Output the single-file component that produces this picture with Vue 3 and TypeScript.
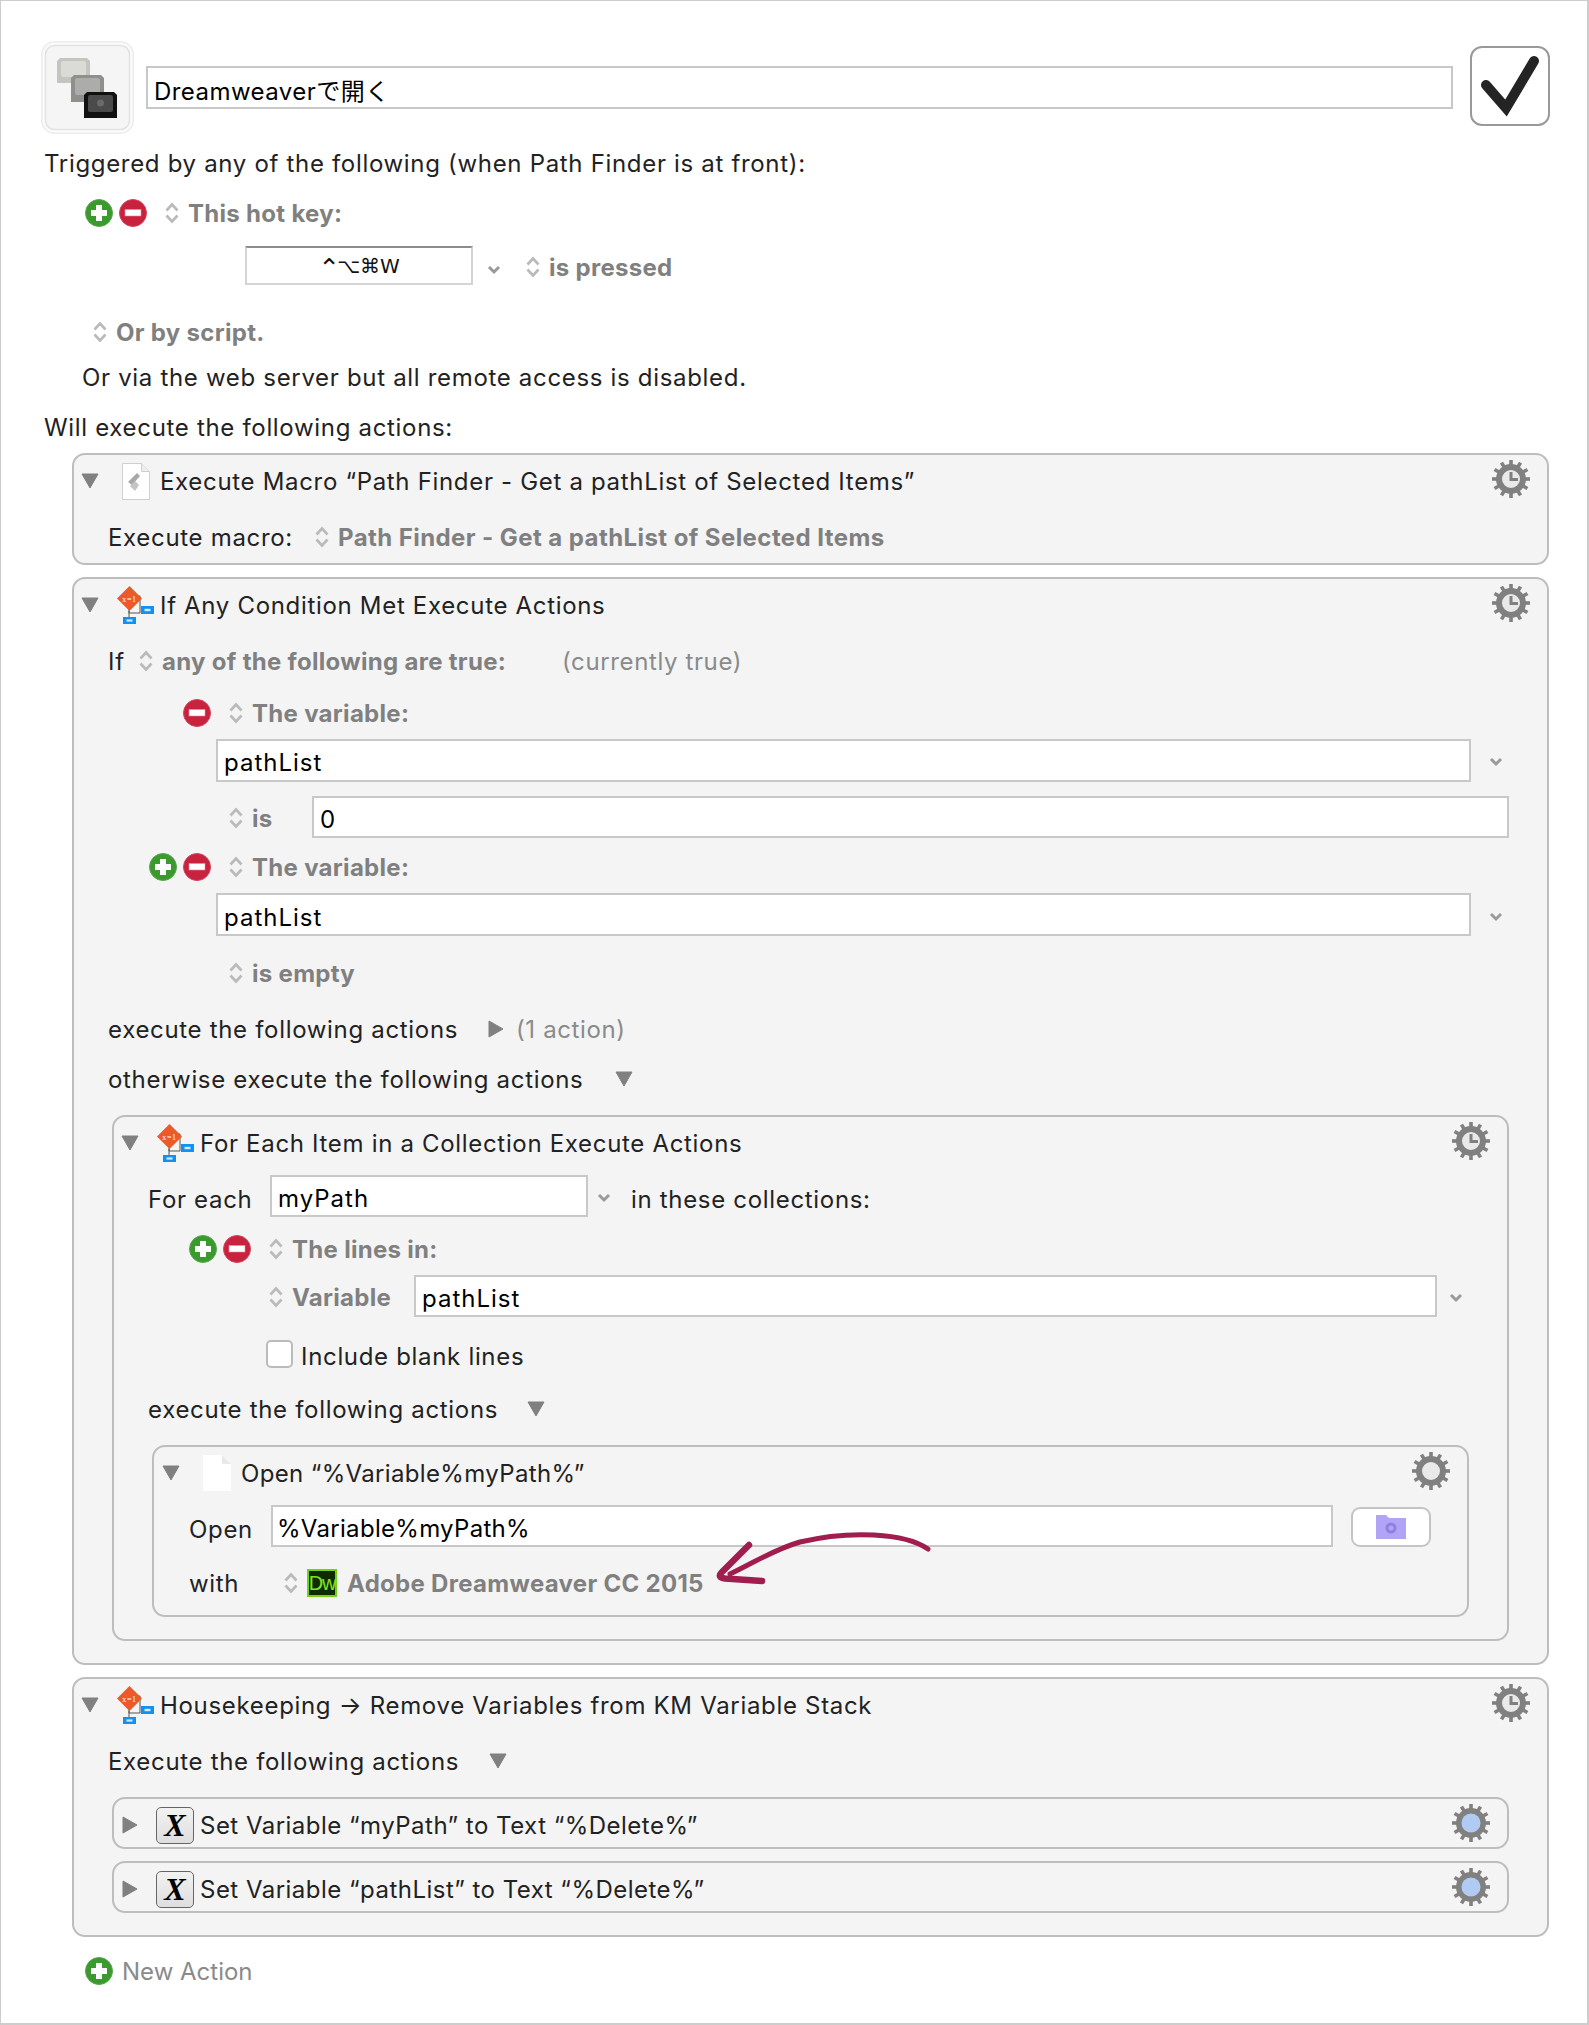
<script setup lang="ts">
const teeth: number[] = Array.from({ length: 12 }, (_, i) => i * 30);
</script>

<template>
  <div class="page">
    <svg class="defs" aria-hidden="true">
      <defs>
        <symbol id="gearbase" viewBox="0 0 38 38">
          <g fill="#808080">
            <rect v-for="a in teeth" :key="a" x="17.2" y="0" width="3.6" height="8" :transform="`rotate(${a} 19 19)`" />
          </g>
          <circle cx="19" cy="19" r="12" fill="#e9e9e9" stroke="#808080" stroke-width="6" />
        </symbol>
        <symbol id="stepper" viewBox="0 0 14 22">
          <path d="M1.500 8.500 7 2.500l5.500 6M1.500 13.500l5.500 6 5.500-6" fill="none" stroke="#bababa" stroke-width="2.700" />
        </symbol>
        <symbol id="tridown" viewBox="0 0 18 16">
          <path d="M1 1h16L9 15z" fill="#808080" stroke="#808080" stroke-linejoin="round" />
        </symbol>
        <symbol id="triright" viewBox="0 0 16 18">
          <path d="M1 1v16l14-8z" fill="#808080" stroke="#808080" stroke-linejoin="round" />
        </symbol>
        <symbol id="chev" viewBox="0 0 14 10">
          <path d="M2 2l5 5 5-5" fill="none" stroke="#9a9a9a" stroke-width="3" />
        </symbol>
        <symbol id="plus" viewBox="0 0 28 28">
          <circle cx="14" cy="14" r="13.500" fill="#3a9a2d" stroke="#5ba64f" />
          <path d="M11 6h6v5h5v6h-5v5h-6v-5H6v-6h5z" fill="#fff" />
        </symbol>
        <symbol id="minus" viewBox="0 0 28 28">
          <circle cx="14" cy="14" r="13.500" fill="#c9223f" stroke="#d2445c" />
          <rect x="6" y="10.500" width="16" height="6.500" fill="#fff" stroke="#e08b99" stroke-width=".6" />
        </symbol>
        <symbol id="flow" viewBox="0 0 37 39">
          <path d="M12 13v14h11V10h-9M12 25v6" fill="none" stroke="#555" stroke-width="1" />
          <path d="M12.500 0l12.500 12.500-12.500 12.500L0 12.500z" fill="#ec5a2a" />
          <text x="12.500" y="15.500" text-anchor="middle" font-family="Liberation Serif" font-size="8" fill="#fff">x=1</text>
          <rect x="24" y="20" width="13" height="8" fill="#1291f5" />
          <rect x="27.500" y="22.800" width="6" height="2.400" fill="#cfe9ff" />
          <rect x="6" y="31" width="13" height="7" fill="#1291f5" />
          <rect x="9.500" y="33.400" width="6" height="2.200" fill="#cfe9ff" />
        </symbol>
      </defs>
    </svg>

    <div class="title-row">
      <div class="macro-icon">
        <svg viewBox="0 0 93 93" width="93" height="93">
          <rect x=".75" y=".75" width="91.500" height="91.500" rx="13" fill="#fbfbfb" stroke="#ececec" stroke-width="1.500" />
          <rect x="4.500" y="4.500" width="84" height="84" rx="9" fill="#f5f5f5" stroke="#e2e2e2" stroke-width="1.500" />
          <g>
            <path d="M19 17h27l3 3v22H16V20z" fill="#c5c5c0" />
            <rect x="20" y="20" width="25" height="16" rx="2" fill="#dadad6" />
          </g>
          <g>
            <path d="M33 34h27l3 3v24H30V37z" fill="#8f8f8c" />
            <rect x="34" y="37" width="25" height="17" rx="2" fill="#acacaa" />
          </g>
          <g>
            <path d="M46 51h27l3 3v23H43V54z" fill="#111" />
            <rect x="47" y="54" width="25" height="17" rx="2" fill="#4b4b4b" />
            <circle cx="59.500" cy="62" r="3.500" fill="#6a6a6a" />
          </g>
        </svg>
      </div>
      <div class="field name-field">Dreamweaverで開く</div>
      <div class="enable-box">
        <svg viewBox="0 0 76 76" width="76" height="76">
          <path d="M14 37 34 60 62 13" fill="none" stroke="#242424" stroke-width="10" stroke-linecap="round" stroke-linejoin="miter" />
        </svg>
      </div>
    </div>

    <div class="row r-trigger"><span>Triggered by any of the following (when Path Finder is at front):</span></div>
    <div class="row r-hotkey">
      <svg class="btn"><use href="#plus" /></svg>
      <svg class="btn"><use href="#minus" /></svg>
      <div class="sel gap-sel"><svg class="step"><use href="#stepper" /></svg><b>This hot key:</b></div>
    </div>
    <div class="row r-keyfield">
      <div class="keyfield"><span class="caret">⌃</span>⌥⌘W</div>
      <svg class="chev chev-key"><use href="#chev" /></svg>
      <div class="sel sel-pressed"><svg class="step"><use href="#stepper" /></svg><b>is pressed</b></div>
    </div>
    <div class="row r-script">
      <div class="sel"><svg class="step"><use href="#stepper" /></svg><b>Or by script.</b></div>
    </div>
    <div class="row r-web"><span>Or via the web server but all remote access is disabled.</span></div>
    <div class="row r-will"><span>Will execute the following actions:</span></div>

    <section class="block b-top b-first">
      <div class="head">
        <svg class="tri"><use href="#tridown" /></svg>
        <div class="slot">
          <svg width="28" height="37" viewBox="0 0 28 37">
            <path d="M.5.5h19l8 8v28H.5z" fill="#fff" stroke="#cfcfcf" />
            <path d="M19.500.5v8h8" fill="#eee" stroke="#cfcfcf" />
            <path d="M6 19l9-9 3 3-8 9z" fill="#a8a8a8" />
            <path d="M8 23l5-5 4 4-4 6z" fill="#c4c4c4" />
          </svg>
        </div>
        <span class="head-title">Execute Macro “Path Finder - Get a pathList of Selected Items”</span>
        <svg class="gear"><use href="#gearbase" /><path d="M19 12v7.500h7" fill="none" stroke="#808080" stroke-width="3" /></svg>
      </div>
      <div class="row row-first">
        <span class="lbl w-macro">Execute macro:</span>
        <div class="sel sel-long"><svg class="step"><use href="#stepper" /></svg><b>Path Finder - Get a pathList of Selected Items</b></div>
      </div>
    </section>

    <section class="block b-top b-second">
      <div class="head">
        <svg class="tri"><use href="#tridown" /></svg>
        <div class="slot"><svg class="flow"><use href="#flow" /></svg></div>
        <span class="head-title">If Any Condition Met Execute Actions</span>
        <svg class="gear"><use href="#gearbase" /><path d="M19 12v7.500h7" fill="none" stroke="#808080" stroke-width="3" /></svg>
      </div>
      <div class="row r-if">
        <span class="lbl w-if">If</span>
        <div class="sel w-any"><svg class="step"><use href="#stepper" /></svg><b>any of the following are true:</b></div>
        <span class="muted">(currently true)</span>
      </div>
      <div class="row r-var1">
        <svg class="btn"><use href="#minus" /></svg>
        <div class="sel gap-sel"><svg class="step"><use href="#stepper" /></svg><b>The variable:</b></div>
      </div>
      <div class="row r-input1">
        <div class="field var-field">pathList</div>
        <svg class="chev chev-var"><use href="#chev" /></svg>
      </div>
      <div class="row r-is">
        <div class="sel w-is low-s"><svg class="step"><use href="#stepper" /></svg><b>is</b></div>
        <div class="field is-field">0</div>
      </div>
      <div class="row r-var2">
        <svg class="btn"><use href="#plus" /></svg>
        <svg class="btn"><use href="#minus" /></svg>
        <div class="sel gap-sel"><svg class="step"><use href="#stepper" /></svg><b>The variable:</b></div>
      </div>
      <div class="row r-input2">
        <div class="field var-field">pathList</div>
        <svg class="chev chev-var"><use href="#chev" /></svg>
      </div>
      <div class="row r-empty">
        <div class="sel"><svg class="step"><use href="#stepper" /></svg><b>is empty</b></div>
      </div>
      <div class="row r-exec1">
        <span class="lbl w-exec1">execute the following actions</span>
        <svg class="tri-r"><use href="#triright" /></svg>
        <span class="muted action-count">(1 action)</span>
      </div>
      <div class="row r-other">
        <span class="lbl w-other">otherwise execute the following actions</span>
        <svg class="tri"><use href="#tridown" /></svg>
      </div>

      <section class="block b-inner">
        <div class="head">
          <svg class="tri"><use href="#tridown" /></svg>
          <div class="slot"><svg class="flow"><use href="#flow" /></svg></div>
          <span class="head-title">For Each Item in a Collection Execute Actions</span>
          <svg class="gear"><use href="#gearbase" /><path d="M19 12v7.500h7" fill="none" stroke="#808080" stroke-width="3" /></svg>
        </div>
        <div class="row r-foreach">
          <span class="lbl w-foreach low">For each</span>
          <div class="field path-field">myPath</div>
          <svg class="chev chev-path"><use href="#chev" /></svg>
          <span class="low in-these">in these collections:</span>
        </div>
        <div class="row r-lines">
          <svg class="btn"><use href="#plus" /></svg>
          <svg class="btn"><use href="#minus" /></svg>
          <div class="sel gap-sel"><svg class="step"><use href="#stepper" /></svg><b>The lines in:</b></div>
        </div>
        <div class="row r-variable">
          <div class="sel w-variable low-s"><svg class="step"><use href="#stepper" /></svg><b>Variable</b></div>
          <div class="field list-field">pathList</div>
          <svg class="chev chev-list"><use href="#chev" /></svg>
        </div>
        <div class="row r-check">
          <span class="check"></span>
          <span class="check-text">Include blank lines</span>
        </div>
        <div class="row r-exec2">
          <span class="lbl w-exec2">execute the following actions</span>
          <svg class="tri"><use href="#tridown" /></svg>
        </div>

        <section class="block b-open">
          <div class="head">
            <svg class="tri"><use href="#tridown" /></svg>
            <div class="slot">
              <svg width="28" height="36" viewBox="0 0 28 36">
                <path d="M0 0h19l9 9v27H0z" fill="#fff" />
                <path d="M19 0v9h9z" fill="#e9e9e9" />
              </svg>
            </div>
            <span class="head-title open-title">Open “%Variable%myPath%”</span>
            <svg class="gear"><use href="#gearbase" /></svg>
          </div>
          <div class="row r-open">
            <span class="lbl w-open low">Open</span>
            <div class="field open-field">%Variable%myPath%</div>
            <div class="folder-btn">
              <svg width="30" height="24" viewBox="0 0 30 24">
                <path d="M0 0h10l3 3h17v21H0z" fill="#b1a4f7" />
                <circle cx="15" cy="13" r="4" fill="none" stroke="#8f80e0" stroke-width="3" />
              </svg>
            </div>
          </div>
          <div class="row r-with">
            <span class="lbl w-with">with</span>
            <div class="sel"><svg class="step"><use href="#stepper" /></svg>
              <span class="dw">Dw</span>
              <b class="dw-name">Adobe Dreamweaver CC 2015</b>
            </div>
          </div>
          <svg class="arrow" viewBox="0 0 240 70" width="240" height="70">
            <path d="M228 29C205 13 150 10 100 22C75 29 55 42 30 54" fill="none" stroke="#a21d4f" stroke-width="5" stroke-linecap="round" />
            <path d="M49 25L22 52C18 56 20 58 25 58.500L62 61" fill="none" stroke="#a21d4f" stroke-width="6.500" stroke-linecap="round" stroke-linejoin="round" />
          </svg>
        </section>
      </section>
    </section>

    <section class="block b-top b-third">
      <div class="head">
        <svg class="tri"><use href="#tridown" /></svg>
        <div class="slot"><svg class="flow"><use href="#flow" /></svg></div>
        <span class="head-title">Housekeeping → Remove Variables from KM Variable Stack</span>
        <svg class="gear"><use href="#gearbase" /><path d="M19 12v7.500h7" fill="none" stroke="#808080" stroke-width="3" /></svg>
      </div>
      <div class="row r-house">
        <span class="lbl w-house">Execute the following actions</span>
        <svg class="tri"><use href="#tridown" /></svg>
      </div>
      <section class="block b-set b-set1">
        <div class="head">
          <svg class="tri-r"><use href="#triright" /></svg>
          <span class="x-icon">X</span>
          <span class="head-title set-title">Set Variable “myPath” to Text “%Delete%”</span>
          <svg class="gear"><use href="#gearbase" /><circle cx="19" cy="19" r="9.500" fill="#b0cbf1" /></svg>
        </div>
      </section>
      <section class="block b-set b-set2">
        <div class="head">
          <svg class="tri-r"><use href="#triright" /></svg>
          <span class="x-icon">X</span>
          <span class="head-title set-title">Set Variable “pathList” to Text “%Delete%”</span>
          <svg class="gear"><use href="#gearbase" /><circle cx="19" cy="19" r="9.500" fill="#b0cbf1" /></svg>
        </div>
      </section>
    </section>

    <div class="row r-new">
      <svg class="btn"><use href="#plus" /></svg>
      <span class="new-text">New Action</span>
    </div>
  </div>
</template>

<style>
html, body { margin: 0; background: #fff; }
</style>

<style scoped>
.page {
  box-sizing: border-box;
  width: 1589px;
  height: 2025px;
  border-style: solid;
  border-color: #cdcdcd;
  border-width: 1px 2px 2px 1px;
  background: #fff;
  overflow: hidden;
  color: #222;
  font-family: Inter, "Noto Sans CJK JP", sans-serif;
  font-size: 24px;
  letter-spacing: .68px;
}
.defs { position: absolute; width: 0; height: 0; }
.title-row { display: flex; align-items: center; padding: 40px 0 0 40px; }
.macro-icon { width: 93px; height: 93px; flex: none; }
.macro-icon svg { display: block; }
.field {
  box-sizing: border-box; background: #fff; border: 2px solid #c8c8c8; color: #000;
  height: 42px; display: flex; align-items: center; padding: 5px 6px 0; white-space: nowrap; flex: none;
  letter-spacing: 1px;
}
.name-field { width: 1307px; height: 43px; margin-left: 12px; letter-spacing: .45px; padding-top: 3px; }
.enable-box {
  box-sizing: border-box; width: 80px; height: 80px; margin: -3px 0 0 17px; flex: none;
  border: 2px solid #999; border-radius: 12px; background: #fff;
}
.enable-box svg { display: block; }
.row { display: flex; align-items: center; height: 30px; white-space: nowrap; }
.sel { display: flex; align-items: center; flex: none; }
.sel b { font-weight: 700; color: #808080; letter-spacing: .3px; }
.sel-long b { letter-spacing: .42px; }
.step { width: 14px; height: 22px; margin-right: 9px; flex: none; }
.btn { width: 28px; height: 28px; flex: none; margin-right: 6px; }
.gap-sel { margin-left: 12px; }
.tri { width: 18px; height: 16px; flex: none; }
.tri-r { width: 16px; height: 18px; flex: none; }
.chev { width: 14px; height: 10px; flex: none; margin-top: 4px; }
.lbl { flex: none; }
.muted { color: #8a8a8a; letter-spacing: .62px; }
.low { margin-top: 6px; }
.low-s { margin-top: 2px; }

.r-trigger { margin: 14px 0 0 43px; }
.r-hotkey { margin: 20px 0 0 84px; }
.r-keyfield { margin: 18px 0 0 244px; height: 44px; }
.keyfield {
  box-sizing: border-box; width: 228px; height: 39px; align-self: flex-start;
  background: #fff; border: 2px solid #d4d4d4; border-top-color: #8c8c8c;
  display: flex; align-items: center; justify-content: center; color: #111;
  font-family: "DejaVu Sans", sans-serif; font-size: 20px; letter-spacing: 0;
}
.caret { font-size: 26px; line-height: 20px; margin: 5px -3px 0 0; }
.chev-key { margin-left: 14px; }
.sel-pressed { margin: 0 0 2px 25px; }
.r-script { margin: 27px 0 0 92px; }
.r-web { margin: 15px 0 0 81px; }
.r-will { margin: 20px 0 0 43px; }

.block {
  box-sizing: border-box; background: #f4f4f4; border: 2px solid #bdbdbd; border-radius: 13px; flex: none;
  position: relative;
}
.b-top { width: 1477px; margin-left: 71px; }
.b-first { margin-top: 11px; padding-bottom: 11px; }
.b-second, .b-third { margin-top: 12px; padding-bottom: 22px; }
.head { display: flex; align-items: center; height: 52px; padding-left: 7px; white-space: nowrap; position: relative; }
.slot { width: 49px; margin-left: 12px; display: flex; justify-content: center; align-items: center; flex: none; }
.flow { width: 37px; height: 39px; }
.gear { width: 38px; height: 38px; margin: 0 17px 4px auto; flex: none; }
.head-title { flex: none; }
.open-title { letter-spacing: .35px; }
.set-title { letter-spacing: .48px; }

.row-first { margin: 15px 0 0 34px; }
.w-macro { width: 207px; }
.r-if { margin: 15px 0 0 34px; }
.w-if { width: 31px; }
.w-any { width: 423px; }
.r-var1 { margin: 22px 0 0 109px; }
.r-input1 { margin: 10px 0 0 142px; height: 44px; }
.r-input2 { margin: 11px 0 0 142px; height: 43px; }
.var-field { width: 1255px; height: 43px; }
.chev-var { margin-left: 18px; }
.r-is { margin: 14px 0 0 155px; height: 42px; }
.w-is { width: 83px; }
.is-field { width: 1197px; }
.r-var2 { margin: 14px 0 0 75px; }
.r-empty { margin: 22px 0 0 155px; }
.r-exec1 { margin: 26px 0 0 34px; }
.w-exec1 { width: 380px; }
.action-count { margin-left: 12px; }
.r-other { margin: 20px 0 0 34px; }
.w-other { width: 507px; }

.b-inner { width: 1397px; margin: 21px 0 0 38px; padding-bottom: 22px; }
.r-foreach { margin: 6px 0 0 34px; height: 42px; }
.w-foreach { width: 122px; }
.path-field { width: 318px; }
.chev-path { margin-left: 9px; }
.in-these { margin-left: 20px; }
.r-lines { margin: 17px 0 0 75px; }
.r-variable { margin: 11px 0 0 155px; height: 42px; }
.w-variable { width: 145px; }
.list-field { width: 1023px; }
.chev-list { margin-left: 12px; }
.r-check { margin: 22px 0 0 152px; }
.check { box-sizing: border-box; width: 27px; height: 28px; background: #fff; border: 2px solid #bbb; border-radius: 5px; flex: none; }
.check-text { margin: 4px 0 0 8px; }
.r-exec2 { margin: 25px 0 0 34px; }
.w-exec2 { width: 379px; }

.b-open { width: 1317px; margin: 21px 0 0 38px; padding-bottom: 17px; }
.b-open .head { padding-left: 8px; }
.r-open { margin: 6px 0 0 35px; height: 42px; }
.w-open { width: 82px; }
.open-field { width: 1062px; letter-spacing: .3px; padding-left: 4px; }
.folder-btn {
  box-sizing: border-box; width: 80px; height: 40px; margin: 2px 0 0 18px; flex: none;
  background: #fff; border: 2px solid #c4c4c4; border-radius: 9px; display: flex; align-items: center; justify-content: center;
}
.r-with { margin: 21px 0 0 35px; }
.w-with { width: 95px; }
.dw {
  box-sizing: border-box; width: 30px; height: 28px; flex: none; display: flex; align-items: center; justify-content: center;
  background: #0f2b02; border: 2px solid #73d216; color: #7fe51b;
  font-family: "Liberation Sans", sans-serif; font-size: 20px; letter-spacing: -1.2px;
}
.dw-name { margin-left: 10px; }
.arrow { position: absolute; left: 546px; top: 73px; overflow: visible; }

.r-house { margin: 15px 0 0 34px; }
.w-house { width: 381px; }
.b-set { width: 1397px; height: 52px; margin-left: 38px; }
.b-set1 { margin-top: 21px; }
.b-set2 { margin-top: 12px; }
.b-set .head { padding-left: 8px; }
.x-icon {
  box-sizing: border-box; width: 38px; height: 37px; margin: 0 6px 0 18px; flex: none;
  display: flex; align-items: center; justify-content: center;
  border: 1.500px solid #666; border-radius: 5px;
  background: linear-gradient(#f2f2f2, #dedede); color: #000;
  font-family: "Liberation Serif", serif; font-style: italic; font-weight: 700; font-size: 32px; letter-spacing: 0;
}
.r-new { margin: 19px 0 0 84px; }
.r-new .btn { margin-right: 9px; }
.new-text { color: #8a8a8a; letter-spacing: 0; }
</style>
